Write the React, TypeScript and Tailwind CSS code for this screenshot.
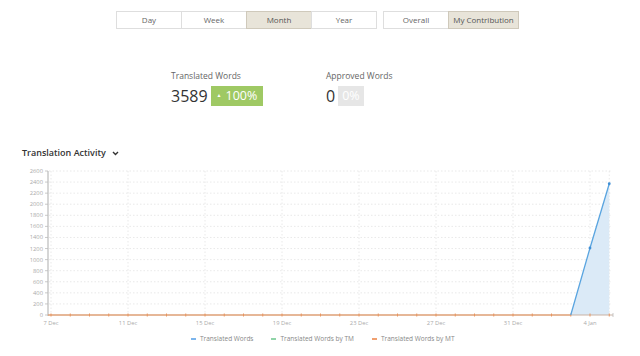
import React from "react";

const periods = ["Day", "Week", "Month", "Year"];

const X0 = 51;
const DAY = 19.25;
const Y0 = 315;
const PER = 144 / 2600;

const xAt = (d: number) => X0 + DAY * d;
const yAt = (v: number) => Y0 - v * PER;

const Chart = () => {
  const yTicks = Array.from({ length: 14 }, (_, i) => i * 200);
  const days = Array.from({ length: 30 }, (_, i) => i);
  const xLabels = [
    { d: 0, t: "7 Dec" },
    { d: 4, t: "11 Dec" },
    { d: 8, t: "15 Dec" },
    { d: 12, t: "19 Dec" },
    { d: 16, t: "23 Dec" },
    { d: 20, t: "27 Dec" },
    { d: 24, t: "31 Dec" },
    { d: 28, t: "4 Jan" },
  ];
  const pts = [
    { d: 27, v: 0 },
    { d: 28, v: 1210 },
    { d: 29, v: 2370 },
  ];
  const line = pts.map((p) => `${xAt(p.d)},${yAt(p.v)}`).join(" ");
  const area = `${xAt(27)},${Y0} ${line} ${xAt(29)},${Y0}`;

  return (
    <svg width="640" height="166" viewBox="0 166 640 166" className="block mt-[6px]">
      {yTicks.map((v) => (
        <g key={v}>
          {v > 0 && (
            <line x1={49} x2={612} y1={yAt(v)} y2={yAt(v)} stroke="#e3e3e3" strokeWidth={0.8} strokeDasharray="1.5 2" />
          )}
          <line x1={45} x2={48} y1={yAt(v)} y2={yAt(v)} stroke="#bbb" strokeWidth={0.8} />
          <text x={43} y={yAt(v) + 2} fontSize={5.8} fill="#aaa" textAnchor="end" fontFamily="Open Sans, sans-serif">
            {v}
          </text>
        </g>
      ))}
      {xLabels.map((l) => (
        <g key={l.d}>
          <line x1={xAt(l.d)} x2={xAt(l.d)} y1={171} y2={Y0} stroke="#e3e3e3" strokeWidth={0.8} strokeDasharray="1.5 2" />
          <text x={xAt(l.d)} y={325} fontSize={5.8} fill="#aaa" textAnchor="middle" fontFamily="Open Sans, sans-serif">
            {l.t}
          </text>
        </g>
      ))}
      <line x1={xAt(29)} x2={xAt(29)} y1={171} y2={Y0} stroke="#e3e3e3" strokeWidth={0.8} strokeDasharray="1.5 2" />
      <line x1={48} x2={48} y1={171} y2={Y0 + 1} stroke="#bbb" strokeWidth={1.2} />
      <polygon points={area} fill="#dbeaf7" />
      <line x1={48} x2={613} y1={Y0} y2={Y0} stroke="#c9b2a3" strokeWidth={1} />
      <line x1={48} x2={xAt(27)} y1={Y0} y2={Y0} stroke="#e8955f" strokeWidth={1} />
      {days.map((d) => (
        <line key={d} x1={xAt(d)} x2={xAt(d)} y1={Y0 - 1.5} y2={Y0 + 1.5} stroke="#e8955f" strokeWidth={1} />
      ))}
      <line x1={613} x2={613} y1={Y0 - 2} y2={Y0 + 2} stroke="#bbb" strokeWidth={0.8} />
      <polyline points={line} fill="none" stroke="#5aa5e0" strokeWidth={1.3} />
      {pts.slice(1).map((p) => (
        <circle key={p.d} cx={xAt(p.d)} cy={yAt(p.v)} r={1.4} fill="#3f8fd6" />
      ))}
    </svg>
  );
};

export default function App() {
  return (
    <div className="w-[640px] h-[356px] bg-white overflow-hidden text-[#555]" style={{ fontFamily: '"Open Sans", sans-serif' }}>
      {/* period / scope toggles */}
      <div className="flex pt-[11px] pl-[116px] gap-[6px]">
        <div className="flex">
          {periods.map((p) => (
            <div
              key={p}
              className={`w-[66px] h-[18px] flex items-center justify-center text-[8px] border -ml-px first:ml-0 ${
                p === "Month" ? "bg-[#e8e4d9] border-[#cfc9bb] text-[#555]" : "bg-white border-[#dedede] text-[#666]"
              }`}
            >
              {p}
            </div>
          ))}
        </div>
        <div className="flex">
          <div className="w-[66px] h-[18px] flex items-center justify-center text-[8px] border border-[#dedede] text-[#666]">
            Overall
          </div>
          <div className="w-[71px] h-[18px] -ml-px flex items-center justify-center text-[8px] border border-[#cfc9bb] bg-[#e8e4d9] text-[#555]">
            My Contribution
          </div>
        </div>
      </div>

      {/* stats */}
      <div className="flex pt-[41px]">
        <div className="pl-[171px] w-[326px]">
          <div className="text-[8.5px] text-[#666] leading-[12px]">Translated Words</div>
          <div className="flex items-center mt-[4px]">
            <span className="text-[16px] text-[#333] leading-[20px]">3589</span>
            <span className="ml-[3px] h-[20px] px-[6px] bg-[#9fc964] text-white text-[12.5px] flex items-center gap-[4px]">
              <span className="text-[5px]">▲</span>100%
            </span>
          </div>
        </div>
        <div>
          <div className="text-[8.5px] text-[#666] leading-[12px]">Approved Words</div>
          <div className="flex items-center mt-[4px]">
            <span className="text-[16px] text-[#333] leading-[20px]">0</span>
            <span className="ml-[3px] h-[20px] px-[4px] bg-[#e6e6e6] text-white text-[12.5px] flex items-center">0%</span>
          </div>
        </div>
      </div>

      {/* chart header */}
      <div className="flex items-center pl-[22px] pt-[40px] gap-[6px]">
        <span className="text-[9px] font-semibold text-[#333] leading-[14px]">Translation Activity</span>
        <svg width="7" height="5" viewBox="0 0 7 5">
          <path d="M1 1 L3.5 3.5 L6 1" fill="none" stroke="#333" strokeWidth="1.4" />
        </svg>
      </div>

      <Chart />

      {/* legend */}
      <div className="flex pl-[191px] gap-[18px] mt-[2px] text-[6.5px] text-[#888]">
        <div className="flex items-center gap-[4px]">
          <span className="w-[5px] h-[2px] bg-[#7cb5ec]" />
          Translated Words
        </div>
        <div className="flex items-center gap-[4px]">
          <span className="w-[5px] h-[2px] bg-[#90d4a8]" />
          Translated Words by TM
        </div>
        <div className="flex items-center gap-[4px]">
          <span className="w-[5px] h-[2px] bg-[#f0a070]" />
          Translated Words by MT
        </div>
      </div>
    </div>
  );
}
